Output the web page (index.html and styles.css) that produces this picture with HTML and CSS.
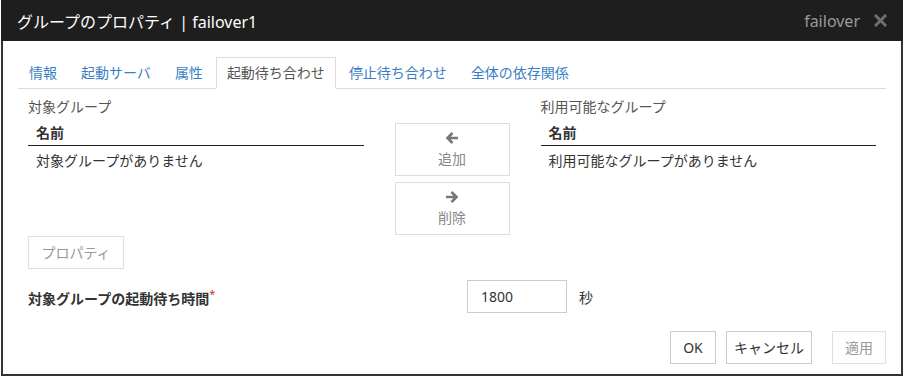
FILE: index.html
```html
<!DOCTYPE html>
<html lang="ja">
<head>
    <meta charset="UTF-8">
    <meta name="viewport" content="width=device-width, initial-scale=1.0">
    <title>グループのプロパティ</title>
    <link rel="stylesheet" href="styles.css">
</head>
<body>
    <div class="dialog">
        <div class="dialog-header">
            <span class="title">グループのプロパティ | failover1</span>
            <span class="header-right">
                failover
                <svg class="close" width="13" height="13" viewBox="0 0 13 13"><path d="M2 2 L11 11 M11 2 L2 11" stroke="#6f6f6f" stroke-width="3" stroke-linecap="square"/></svg>
            </span>
        </div>
        <div class="dialog-body">
            <ul class="tabs">
                <li><a>情報</a></li>
                <li><a>起動サーバ</a></li>
                <li><a>属性</a></li>
                <li class="active"><a>起動待ち合わせ</a></li>
                <li><a>停止待ち合わせ</a></li>
                <li><a>全体の依存関係</a></li>
            </ul>
            <div class="tab-content">
                <div class="lists">
                    <div class="panel">
                        <div class="panel-label">対象グループ</div>
                        <table class="list">
                            <thead><tr><th>名前</th></tr></thead>
                            <tbody><tr><td>対象グループがありません</td></tr></tbody>
                        </table>
                    </div>
                    <div class="move-buttons">
                        <button class="move" disabled>
                            <svg width="14" height="14" viewBox="0 0 14 14"><path d="M13 7 H2.5 M7.5 2 L2.5 7 L7.5 12" fill="none" stroke="#777" stroke-width="2.6"/></svg>
                            <span>追加</span>
                        </button>
                        <button class="move" disabled>
                            <svg width="14" height="14" viewBox="0 0 14 14"><path d="M1 7 H11.5 M6.5 2 L11.5 7 L6.5 12" fill="none" stroke="#777" stroke-width="2.6"/></svg>
                            <span>削除</span>
                        </button>
                    </div>
                    <div class="panel">
                        <div class="panel-label">利用可能なグループ</div>
                        <table class="list">
                            <thead><tr><th>名前</th></tr></thead>
                            <tbody><tr><td>利用可能なグループがありません</td></tr></tbody>
                        </table>
                    </div>
                </div>
                <button class="btn btn-prop" disabled>プロパティ</button>
                <div class="form-row">
                    <label class="form-label">対象グループの起動待ち時間<sup>*</sup></label>
                    <input class="form-input" type="text" value="1800">
                    <span class="unit">秒</span>
                </div>
            </div>
            <div class="footer">
                <button class="btn btn-ok">OK</button>
                <button class="btn btn-cancel">キャンセル</button>
                <button class="btn btn-apply" disabled>適用</button>
            </div>
        </div>
    </div>
</body>
</html>
```
FILE: styles.css
```css
body { margin: 0; background: #fff; font-family: "Noto Sans", "Noto Sans CJK JP", sans-serif; font-size: 14px; color: #333; }
.dialog { margin-left: 1px; width: 902px; height: 376px; box-sizing: border-box; border: 2px solid #333; border-top: 0; }
.dialog-header { height: 41px; background: #1e1e1e; display: flex; align-items: center; justify-content: space-between; padding: 0 16px 0 16px; margin: 0 -2px; }
.title { color: #fff; font-size: 16px; }
.header-right { color: #9a9a9a; font-size: 16px; display: flex; align-items: center; gap: 14px; }
.close { display: block; }
.dialog-body { padding: 16px 15px 0 15px; }
.tabs { list-style: none; margin: 0; padding: 0; display: flex; border-bottom: 1px solid #ddd; }
.tabs li { margin-right: 2px; margin-bottom: -1px; }
.tabs a { display: block; padding: 5px 10px; line-height: 20px; border: 1px solid transparent; color: #3a7fc4; }
.tabs .active a { color: #555; border-color: #ddd; border-bottom-color: #fff; background: #fff; }
.tab-content { padding: 0 10px; }
.lists { display: grid; grid-template-columns: 1fr 115px 1fr; column-gap: 31px; }
.panel-label { color: #555; line-height: 20px; margin-top: 8px; }
.list { width: 100%; border-collapse: collapse; }
.list th { text-align: left; font-weight: bold; line-height: 20px; padding: 6px 8px 2px; border-bottom: 1px solid #222; }
.list td { line-height: 20px; padding: 5px 8px; }
.move-buttons { display: flex; flex-direction: column; gap: 6px; padding-top: 34px; }
.move { display: flex; flex-direction: column; align-items: center; gap: 4px; height: 53px; box-sizing: border-box; padding: 7px 0 0; border: 1px solid #ddd; background: #fff; color: #888; font: inherit; line-height: 20px; }
.btn { font: inherit; line-height: 20px; padding: 6px 12px 5px; border: 1px solid #ccc; background: #fff; color: #333; }
.btn[disabled] { color: #999; border-color: #e0e0e0; }
.btn-prop { margin-top: 1px; width: 96px; }
.form-row { display: flex; align-items: center; margin-top: 11px; }
.form-label { width: 439px; font-weight: bold; color: #333; }
.form-label sup { color: #c0392b; font-weight: normal; font-size: 11px; }
.form-input { width: 100px; height: 33px; box-sizing: border-box; border: 1px solid #ccc; padding: 0 13px; font: inherit; color: #333; }
.unit { margin-left: 12px; }
.footer { display: flex; justify-content: flex-end; margin-top: 18px; }
.btn-ok { width: 46px; padding-left: 0; padding-right: 0; }
.btn-cancel { margin-left: 10px; width: 86px; padding-left: 0; padding-right: 0; }
.btn-apply { margin-left: 20px; width: 54px; padding-left: 0; padding-right: 0; }
```
